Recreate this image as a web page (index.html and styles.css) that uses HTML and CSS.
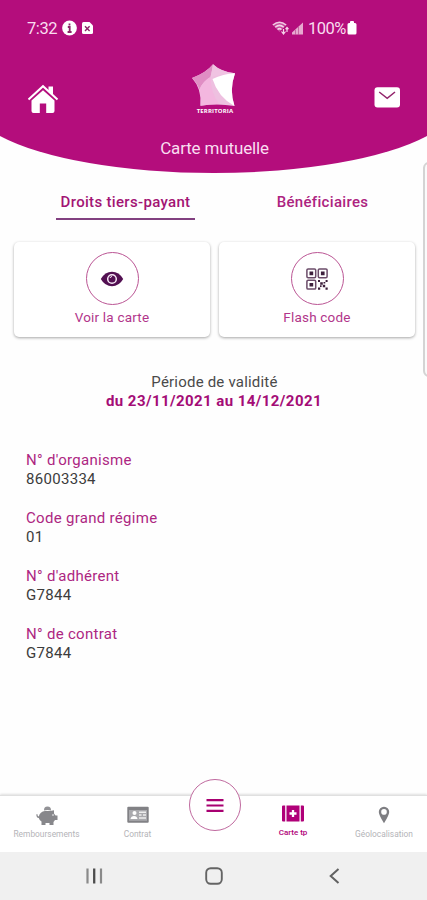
FILE: index.html
```html
<!DOCTYPE html>
<html lang="fr">
<head>
<meta charset="utf-8">
<title>Carte mutuelle</title>
<link rel="stylesheet" href="styles.css">
</head>
<body>
<div class="screen">
  <header class="header">
    <svg class="header-bg" viewBox="0 0 427 174" width="427" height="174"><path d="M0 0H427V136A243 71 0 0 1 0 136Z" fill="#b40d7c"/></svg>
    <div class="status">
      <span class="clock">7:32</span>
      <svg class="info" width="15" height="16" viewBox="0 0 15 16"><circle cx="7.5" cy="8" r="7.4" fill="#fff"/><path d="M7.5 3.4v2M5.8 7h1.9v5M5.6 12h4" stroke="#8d2468" stroke-width="1.8" fill="none"/></svg>
      <svg class="sim" width="11" height="12" viewBox="0 0 11 12"><path d="M1.5 0H7.5L11 3.5V10.5Q11 12 9.5 12H1.5Q0 12 0 10.5V1.5Q0 0 1.5 0Z" fill="#fff"/><path d="M3 4.2L7.6 9M7.6 4.2L3 9" stroke="#8d2468" stroke-width="1.4"/></svg>
      <svg class="signal" width="32" height="15" viewBox="0 0 32 15"><g fill="none" stroke="#f0c5e2" stroke-width="1.5"><path d="M.8 4Q7.5-1.5 14.2 4M3.2 6.3Q7.5 2.5 11.8 6.3M5.5 8.5Q7.5 6.8 9.5 8.5"/></g><path d="M1 4L7.5 11 14 4Q7.500-1 1 4Z" fill="#fff" opacity=".25"/><path d="M11.5 13V8M9.500 10.500l2 2.500 2-2.500M15 11V6.500M13.500 8.200L15 6.500l1.500 1.700" stroke="#f5d4ea" stroke-width="1.200" fill="none"/><path d="M20 13.500V11.500L31 1.500V13.500Z" fill="#e7a9d0"/><path d="M23.500 9V14M26.500 6V14" stroke="#b94b91" stroke-width=".7"/></svg>
      <span class="percent">100%</span>
      <svg class="battery" width="10" height="14" viewBox="0 0 10 14"><path d="M3 1Q3 0 4 0H6Q7 0 7 1V2H8Q9.500 2 9.500 3.500V12Q9.500 13.500 8 13.500H2Q.5 13.500.5 12V3.500Q.5 2 2 2H3Z" fill="#fff"/></svg>
    </div>
    <div class="toolbar">
      <svg class="home" width="32" height="30" viewBox="0 0 32 30"><path d="M4.500 16.500L16 6.200 27.500 16.500V27Q27.500 29 25.500 29H19.200V19.500H12.800V29H6.500Q4.500 29 4.500 27Z" fill="#fff"/><path d="M1.500 15.500L16 2.200 30.500 15.500" fill="none" stroke="#fff" stroke-width="2"/><path d="M21.500 2.500H26V11L21.500 7Z" fill="#fff"/></svg>
      <div class="brand">
        <svg width="44" height="43" viewBox="0 0 44 43"><path d="M0 14Q14 9 21 .3Q29 8 43 9.300Q37 26 42.500 42Q25 39 8.500 41.800Q10 25 0 14Z" fill="#eec0e0"/><path d="M0 14Q14 9 21 .3Q20 7 18.500 13Q11 17 7.500 25.500Q5 18.500 0 14Z" fill="#e08ec4"/><path d="M21 .3Q29 8 43 9.300Q30 10 18.500 13Q20 7 21 .3Z" fill="#f0c3e2"/><path d="M18.500 13Q11 17 7.500 25.500Q9.500 33 8.500 41.800Q18 40 27 40Q19 29 18.500 13Z" fill="#f3b7df"/><path d="M43 9.300Q37 26 42.500 42Q26 33 20.500 15Q31 10 43 9.300Z" fill="#fff"/></svg>
        <span class="brand-name">TERRITORIA</span>
      </div>
      <svg class="mail" width="27" height="21" viewBox="0 0 27 21"><rect x=".5" y=".3" width="25.500" height="20.200" rx="3" fill="#fff"/><path d="M5.200 5L13.200 11.300 21 5" fill="none" stroke="#93246c" stroke-width="1.500"/></svg>
    </div>
    <h1 class="title">Carte mutuelle</h1>
  </header>

  <main class="content">
    <nav class="tabs">
      <div class="tab"><span class="tab-label active">Droits tiers-payant</span></div>
      <div class="tab"><span class="tab-label second">Bénéficiaires</span></div>
    </nav>
    <section class="cards">
      <div class="card">
        <span class="ring"><svg width="24" height="16" viewBox="0 0 24 16"><path d="M.8 8Q5 .7 12 .7T23.200 8Q19 15.300 12 15.300T.8 8Z" fill="#531052"/><circle cx="12" cy="8" r="4.300" fill="none" stroke="#f8eaf7" stroke-width="1.500"/><path d="M10 7Q10.500 5.500 12 5.500" stroke="#f8eaf7" fill="none"/></svg></span>
        <span class="card-label voir">Voir la carte</span>
      </div>
      <div class="card">
        <span class="ring"><svg width="22" height="22" viewBox="0 0 22 22"><g fill="none" stroke="#6b4c69" stroke-width="1.500"><rect x=".9" y=".9" width="8.800" height="8.800" rx="1.200"/><rect x="12.300" y=".9" width="8.800" height="8.800" rx="1.200"/><rect x=".9" y="12.300" width="8.800" height="8.800" rx="1.200"/></g><path d="M3.500 3.500h3.700v3.700H3.500zM14.900 3.500h3.700v3.700h-3.700zM3.500 14.900h3.700v3.700H3.500zM12 12h2v2h-2zM14.200 14.200h2.600v2.600h-2.600zM16.800 16.800h2.400v2.400h-2.400zM19.600 12h2v2h-2zM17.500 14h1.800v1.600h-1.800zM12 19.500h2.200v2.200H12zM14 17.200h1.600v1.800H14zM19.500 19.500h2.200v2.200h-2.200z" fill="#3d203c"/></svg></span>
        <span class="card-label flash">Flash code</span>
      </div>
    </section>
    <section class="period">
      <div class="period-label">Période de validité</div>
      <div class="period-dates">du 23/11/2021 au 14/12/2021</div>
    </section>
    <dl class="details">
      <div class="detail"><dt>N° d'organisme</dt><dd>86003334</dd></div>
      <div class="detail"><dt>Code grand régime</dt><dd>01</dd></div>
      <div class="detail"><dt>N° d'adhérent</dt><dd>G7844</dd></div>
      <div class="detail"><dt>N° de contrat</dt><dd>G7844</dd></div>
    </dl>
  </main>
  <div class="edge-handle"></div>

  <nav class="bottom">
    <div class="item reimb"><svg width="22" height="20" viewBox="0 0 22 20"><path d="M2.800 10.500Q4 5.500 9 5H14L18 4.200V7.500L19.500 9.500H21.500V14H19L17.500 16V19H13.500V17H9.500V19H5.500V15.500Q3.300 14 2.800 12Q.5 12 .3 8.500L1.300 8Q1.600 10.500 2.800 10.500Z" fill="#87878b"/><path d="M8 4.500Q7.800.5 11.500.5T15 4.500Q11.500 3.300 8 4.500Z" fill="#929296"/><circle cx="17" cy="9" r=".8" fill="#fff"/></svg><span>Remboursements</span></div>
    <div class="item contrat"><svg width="22" height="18" viewBox="0 0 22 18"><rect x=".3" y=".8" width="21.400" height="16" rx="1" fill="#818185"/><path d="M2 4h18v10.800H2z" fill="#aaaaae"/><circle cx="7.500" cy="7" r="2" fill="#fff"/><path d="M3.500 13Q4 10 7 10T10.500 13Z" fill="#fff"/><path d="M12 6.200h7M12 9h2.500M16 9h3M12 12h7" stroke="#eee" stroke-width="1.500"/></svg><span>Contrat</span></div>
    <div class="menu"><svg width="18" height="15" viewBox="0 0 18 15"><path d="M.5 2.200H17.500M.5 7.500H17.500M.5 12.800H17.500" stroke="#a80071" stroke-width="2.200"/></svg></div>
    <div class="item carte"><svg width="22" height="17" viewBox="0 0 22 17"><path d="M1 .5H3.200V16.500H1Q0 16.500 0 15.500V1.500Q0 .5 1 .5ZM4.500.5H17.500V16.500H4.500ZM18.800.5H21Q22 .5 22 1.500V15.500Q22 16.500 21 16.500H18.800Z" fill="#b00078"/><path d="M11 5V12M7.500 8.500H14.500" stroke="#fff" stroke-width="2.300"/></svg><span>Carte tp</span></div>
    <div class="item geo"><svg width="12" height="18" viewBox="0 0 12 18"><path fill-rule="evenodd" d="M6 .7A5.200 5.200 0 0 1 11.200 6Q11.200 9 6 17.300Q.8 9 .8 6A5.200 5.200 0 0 1 6 .7ZM6 3.100A2.800 2.800 0 1 0 6 8.700 2.800 2.800 0 1 0 6 3.100Z" fill="#7e7e82"/></svg><span>Géolocalisation</span></div>
  </nav>
  <footer class="system">
    <svg width="17" height="16" viewBox="0 0 17 16"><path d="M1.500.5V15.500M15 .5V15.500" stroke="#8a8a8a" stroke-width="2.200"/><path d="M8.200.5V15.500" stroke="#4c4c4c" stroke-width="2.300"/></svg>
    <svg class="square" width="18" height="18" viewBox="0 0 18 18"><rect x="1.200" y="1.200" width="15.600" height="15.600" rx="4.500" fill="none" stroke="#646464" stroke-width="1.900"/></svg>
    <svg width="11" height="16" viewBox="0 0 11 16"><path d="M9.500 1L1.700 8 9.500 15" fill="none" stroke="#616161" stroke-width="2"/></svg>
  </footer>
</div>
</body>
</html>
```
FILE: styles.css
```css
* { box-sizing: border-box; }
body { margin: 0; background: #fefefe; font-family: Roboto, "Liberation Sans", sans-serif; }
svg { display: block; flex-shrink: 0; }
.screen { position: relative; width: 427px; height: 900px; display: flex; flex-direction: column; overflow: hidden; }

.header { position: relative; height: 174px; flex-shrink: 0; color: #f9ddf0; }
.header > * { position: relative; }
.header .header-bg { position: absolute; inset: 0; }
.status { display: flex; align-items: center; height: 56px; padding: 0 70px 0 27px; font-size: 16.5px; }
.clock { width: 35px; letter-spacing: -.4px; }
.sim { margin-left: 5px; }
.signal { margin-left: auto; margin-right: 4px; }
.percent { width: 39px; letter-spacing: -.5px; }
.toolbar { display: flex; justify-content: space-between; padding: 8px 26px 0 27px; height: 76px; }
.home { margin-top: 20px; }
.mail { margin-top: 23px; }
.brand { display: flex; flex-direction: column; align-items: center; width: 44px; margin-right: 6px; }
.brand-name { margin-top: 1px; padding-left: 3px; color: #fff; font: 700 6px/7px "Open Sans", sans-serif; letter-spacing: .15px; white-space: nowrap; }
.title { margin: 4px 0 0 2px; font-weight: 400; font-size: 17px; line-height: 24px; letter-spacing: -.15px; text-align: center; }

.content { flex: 1; }
.tabs { display: flex; justify-content: space-between; padding: 16px 44px 0 56px; height: 66px; }
.tab-label { display: block; height: 30px; font-size: 15px; font-weight: 500; line-height: 24px; color: #ad2380; white-space: nowrap; text-align: center; }
.tab-label.active { width: 139px; color: #a31474; letter-spacing: .32px; border-bottom: 2px solid #824080; }
.tab-label.second { width: 121px; letter-spacing: .32px; }
.cards { display: flex; gap: 9px; padding: 2px 12px 0 14px; }
.card { flex: 1; height: 95px; display: flex; flex-direction: column; align-items: center; padding: 10px 0 0 0; background: #fff; border-radius: 5px; box-shadow: 0 1px 3px rgba(0,0,0,.35); }
.ring { width: 53px; height: 53px; border: 1.5px solid #bb5594; border-radius: 50%; display: flex; align-items: center; justify-content: center; }
.card-label { margin-top: 3px; font-size: 13.5px; line-height: 18px; letter-spacing: .2px; color: #b2368b; }

.period { margin-top: 36px; text-align: center; font-size: 15px; line-height: 18.500px; color: #4a4a4a; }
.period-label { letter-spacing: .2px; padding-left: 2px; }
.period-dates { color: #a40c76; font-weight: 700; letter-spacing: .43px; padding-left: 1px; }
.details { margin: 41px 0 0 26px; font-size: 15px; line-height: 18.500px; letter-spacing: .3px; }
.detail { height: 58px; }
.details dt { color: #ad2682; }
.details dd { margin: 0; color: #3c3c3c; }
.edge-handle { position: absolute; left: 423px; top: 162px; width: 12px; height: 215px; border: 2px solid #d4d4d4; border-radius: 6px; background: #fbfbfb; }

.bottom { height: 57px; display: flex; flex-shrink: 0; padding-left: 1px; background: #fff; border-top: 1px solid #e0e0e0; box-shadow: 0 -1px 2px rgba(0,0,0,.12); }
.item { display: flex; flex-direction: column; align-items: center; flex-shrink: 0; font-size: 8.4px; line-height: 11px; color: #b4b4b8; white-space: nowrap; }
.item svg { margin-top: 10px; }
.item span { margin-top: auto; margin-bottom: 12px; }
.reimb { width: 91px; }
.contrat { width: 91px; }
.carte { width: 92px; color: #b00078; font-weight: 500; }
.item.carte svg { margin-top: 9px; }
.item.carte span { margin-bottom: 14px; font-size: 8px; }
.geo { width: 90px; }
.menu { width: 52px; height: 52px; margin: -17px 6px 0 6px; flex-shrink: 0; border: 1.500px solid #c06a9f; border-radius: 50%; background: #fff; display: flex; align-items: center; justify-content: center; }
.system { height: 48px; flex-shrink: 0; display: flex; align-items: center; justify-content: space-between; padding: 0 87px 0 86px; background: #f0f0f0; }
.square { margin-right: 4px; }
```
